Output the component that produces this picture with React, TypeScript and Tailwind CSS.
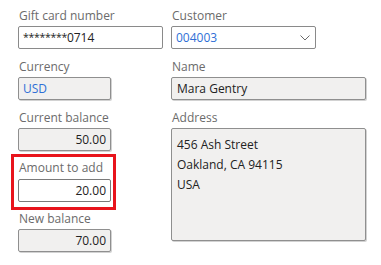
import React from "react";

const font = { fontFamily: '"Open Sans", "Noto Sans", sans-serif' };

function Label({ children }: { children: React.ReactNode }) {
  return (
    <div className="h-[16px] leading-[16px] text-[12px] text-[#6b6b6b] pl-[1px] whitespace-nowrap">
      {children}
    </div>
  );
}

export default function App() {
  return (
    <div className="w-[381px] h-[265px] bg-white text-[12px]" style={font}>
      <div className="flex gap-[8px] pl-[18px] pt-[8px]">
        {/* Left column */}
        <div className="flex flex-col w-[145px]">
          <Label>Gift card number</Label>
          <div className="mt-[2px] h-[23px] w-[145px] border border-[#8a8a8a] rounded-[2px] bg-white flex items-center px-[4px] text-[#222]">
            <span className="text-[10.5px] tracking-[-0.3px]">********</span>
            <span>0714</span>
          </div>

          <div className="mt-[10px]">
            <Label>Currency</Label>
          </div>
          <div className="mt-[2px] h-[23px] w-[93px] border border-[#8f8f8f] rounded-[2px] bg-[#f1f0ef] shadow-[1px_1px_0_#d2d2d2] flex items-center px-[4px] text-[#2f6fd6]">
            USD
          </div>

          <div className="mt-[10px]">
            <Label>Current balance</Label>
          </div>
          <div className="mt-[2px] h-[23px] w-[93px] border border-[#8f8f8f] rounded-[2px] bg-[#f1f0ef] shadow-[1px_1px_0_#d2d2d2] flex items-center justify-end px-[4px] text-[#222]">
            50.00
          </div>

          <div className="-ml-[7px] mt-[3px] w-[105px] border-[3px] border-[#e8141c] pl-[4px] pr-[2px] pt-[3px] pb-[5px]">
            <Label>Amount to add</Label>
            <div className="mt-[3px] h-[23px] w-[93px] border border-[#7a7a7a] rounded-[2px] bg-white flex items-center justify-end px-[4px] text-[#222]">
              20.00
            </div>
          </div>

          <div className="mt-[1px]">
            <Label>New balance</Label>
          </div>
          <div className="mt-[2px] h-[23px] w-[93px] border border-[#8f8f8f] rounded-[2px] bg-[#f1f0ef] shadow-[1px_1px_0_#d2d2d2] flex items-center justify-end px-[4px] text-[#222]">
            70.00
          </div>
        </div>

        {/* Right column */}
        <div className="flex flex-col w-[195px]">
          <Label>Customer</Label>
          <div className="mt-[2px] h-[23px] w-[145px] border border-[#8a8a8a] rounded-[2px] bg-white flex items-center justify-between pl-[4px] pr-[5px] text-[#2f6fd6]">
            <span>004003</span>
            <svg width="10" height="6" viewBox="0 0 10 6" fill="none">
              <path d="M0.5 0.5 L5 5 L9.5 0.5" stroke="#6a6a6a" strokeWidth="1" />
            </svg>
          </div>

          <div className="mt-[10px]">
            <Label>Name</Label>
          </div>
          <div className="mt-[2px] h-[23px] w-[195px] border border-[#8f8f8f] rounded-[2px] bg-[#f1f0ef] shadow-[1px_1px_0_#d2d2d2] flex items-center px-[5px] text-[#222]">
            Mara Gentry
          </div>

          <div className="mt-[10px]">
            <Label>Address</Label>
          </div>
          <div className="mt-[2px] h-[113px] w-[195px] border border-[#8f8f8f] rounded-[2px] bg-[#f1f0ef] shadow-[1px_1px_0_#d2d2d2] px-[5px] pt-[6px] text-[#222] leading-[20px]">
            <div>456 Ash Street</div>
            <div>Oakland, CA 94115</div>
            <div>USA</div>
          </div>
        </div>
      </div>
    </div>
  );
}
